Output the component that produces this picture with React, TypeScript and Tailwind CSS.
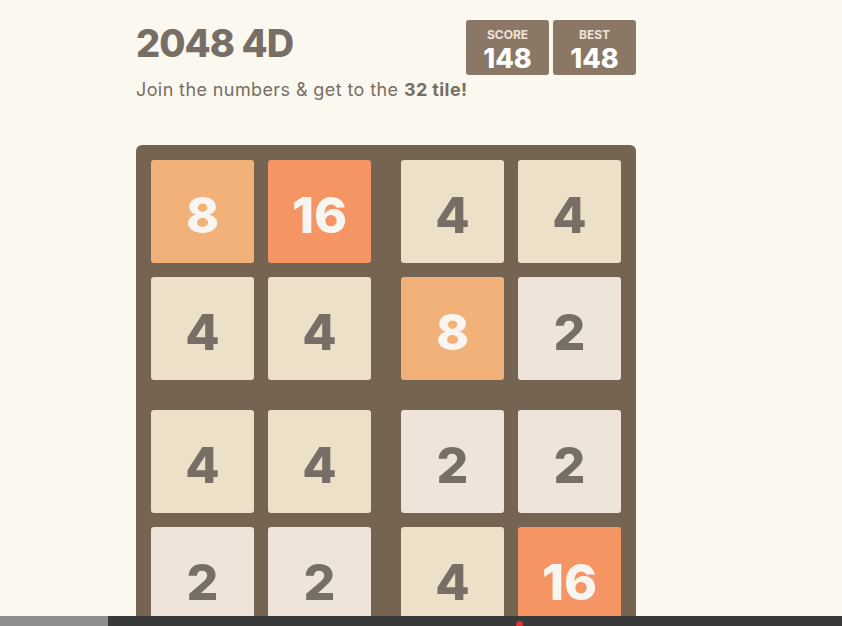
const tileStyle: Record<number, string> = {
  2: "bg-[#eee4da] text-[#776e65]",
  4: "bg-[#ede0c8] text-[#776e65]",
  8: "bg-[#f2b179] text-[#f9f6f2]",
  16: "bg-[#f59563] text-[#f9f6f2]",
};

// four 2x2 blocks, laid out as a 2x2 grid of blocks
const blocks: number[][] = [
  [8, 16, 4, 4],
  [4, 4, 8, 2],
  [4, 4, 2, 2],
  [2, 2, 4, 16],
];

function Tile({ value }: { value: number }) {
  return (
    <div
      className={`w-[103px] h-[103px] rounded-[3px] flex items-center justify-center
        text-[50px] font-extrabold leading-none pt-[6px] ${tileStyle[value]}`}
    >
      {value}
    </div>
  );
}

function Block({ tiles }: { tiles: number[] }) {
  return (
    <div className="grid grid-cols-2 gap-[14px]">
      {tiles.map((t, i) => (
        <Tile value={t} key={i} />
      ))}
    </div>
  );
}

function ScoreBox({ label, value }: { label: string; value: number }) {
  return (
    <div className="w-[83px] h-[55px] rounded-[3px] bg-[#8b7765]
      flex flex-col items-center pt-[9px]">
      <div className="text-[12px] font-bold text-[#eee4da] leading-[12px]">
        {label}
      </div>
      <div className="text-[27px] font-extrabold text-white leading-[32px] mt-[2px]">
        {value}
      </div>
    </div>
  );
}

export default function App() {
  return (
    <div
      className="min-h-screen bg-[#fbf8ef] text-[#776e65]"
      style={{ fontFamily: "Inter, 'Open Sans', sans-serif" }}
    >
      <div className="w-[500px] ml-[136px] pt-[20px]">
        <div className="flex justify-between items-start">
          <h1 className="text-[38px] font-extrabold leading-none mt-[4px] tracking-tight">
            2048 4D
          </h1>
          <div className="flex gap-[4px]">
            <ScoreBox label="SCORE" value={148} />
            <ScoreBox label="BEST" value={148} />
          </div>
        </div>
        <p className="text-[18px] mt-[6px] leading-none tracking-[0.4px]">
          Join the numbers &amp; get to the <b className="font-bold">32 tile!</b>
        </p>
        <div className="mt-[46px] bg-[#756452] rounded-[6px] p-[15px] grid grid-cols-2 gap-[30px]">
          {blocks.map((b, i) => (
            <Block tiles={b} key={i} />
          ))}
        </div>
      </div>
      <div className="fixed bottom-0 left-0 right-0 h-[10px] bg-[#393939] flex">
        <div className="w-[108px] h-full bg-[#8e8e8e]" />
        <div className="absolute left-[516px] top-[5px] w-[7px] h-[7px] rounded-full bg-[#d33]" />
      </div>
    </div>
  );
}
